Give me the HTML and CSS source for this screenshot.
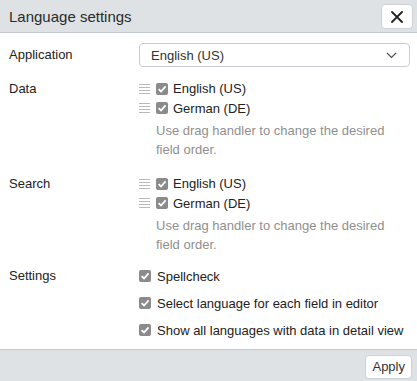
FILE: index.html
```html
<!DOCTYPE html>
<html>
<head>
<meta charset="utf-8">
<link rel="stylesheet" href="styles.css">
</head>
<body>
<div class="dialog">
  <div class="header">
    <span class="title">Language settings</span>
    <button class="close" aria-label="Close">
      <svg width="12" height="12" viewBox="0 0 12 12"><path d="M1 1L11 11M11 1L1 11" stroke="#222" stroke-width="1.8" stroke-linecap="round"/></svg>
    </button>
  </div>
  <div class="body">
    <div class="row row-app">
      <div class="label">Application</div>
      <div class="content">
        <div class="select">
          <span>English (US)</span>
          <svg width="11" height="7" viewBox="0 0 11 7"><path d="M1 1L5.5 5.5L10 1" fill="none" stroke="#555" stroke-width="1.2"/></svg>
        </div>
      </div>
    </div>
    <div class="row row-data">
      <div class="label">Data</div>
      <div class="content">
        <div class="item"><span class="handle"></span><span class="cb"></span><span>English (US)</span></div>
        <div class="item"><span class="handle"></span><span class="cb"></span><span>German (DE)</span></div>
        <div class="hint">Use drag handler to change the desired<br>field order.</div>
      </div>
    </div>
    <div class="row row-search">
      <div class="label">Search</div>
      <div class="content">
        <div class="item"><span class="handle"></span><span class="cb"></span><span>English (US)</span></div>
        <div class="item"><span class="handle"></span><span class="cb"></span><span>German (DE)</span></div>
        <div class="hint">Use drag handler to change the desired<br>field order.</div>
      </div>
    </div>
    <div class="row row-settings">
      <div class="label">Settings</div>
      <div class="content settings">
        <div class="sitem"><span class="cb"></span><span>Spellcheck</span></div>
        <div class="sitem"><span class="cb"></span><span>Select language for each field in editor</span></div>
        <div class="sitem"><span class="cb"></span><span>Show all languages with data in detail view</span></div>
      </div>
    </div>
  </div>
  <div class="footer">
    <button class="apply">Apply</button>
  </div>
</div>
</body>
</html>
```
FILE: styles.css
```css
* { box-sizing: border-box; }
html, body { margin: 0; padding: 0; }
body {
  font-family: "Liberation Sans", Arial, sans-serif;
  font-size: 13px;
  color: #222;
  background: #fff;
  width: 417px;
  height: 381px;
  overflow: hidden;
}
.dialog { width: 417px; height: 381px; display: flex; flex-direction: column; }
.header {
  height: 33px;
  background: #dee2e5;
  border-bottom: 1px solid #c5cacf;
  display: flex;
  align-items: center;
  justify-content: space-between;
  padding: 0 4px 0 9px;
}
.title { font-size: 15px; color: #2a2a2a; }
.close {
  width: 32px;
  height: 25px;
  background: #fff;
  border: 1px solid #cfd3d7;
  border-radius: 4px;
  display: flex;
  align-items: center;
  justify-content: center;
  padding: 0;
  margin-top: 1px;
}
.body { flex: 1; padding: 10px 7px 0 9px; }
.row { display: grid; grid-template-columns: 130px 1fr; }
.label { line-height: 19px; }
.row-app .label { line-height: 24px; }
.select {
  height: 24px;
  border: 1px solid #c9cdd1;
  border-radius: 4px;
  display: flex;
  align-items: center;
  justify-content: space-between;
  padding: 0 12px 0 11px;
  color: #333;
}
.row-data { margin-top: 12px; }
.row-search { margin-top: 15px; }
.row-settings { margin-top: 12px; }
.item { display: flex; align-items: center; height: 19.5px; }
.handle {
  width: 11px;
  height: 10px;
  margin-right: 6px;
  background: repeating-linear-gradient(to bottom, #b9b9b9 0 1px, transparent 1px 3px);
}
.cb {
  width: 12px;
  height: 12px;
  border-radius: 2px;
  background: #8b8b8b url("data:image/svg+xml,%3Csvg xmlns='http://www.w3.org/2000/svg' viewBox='0 0 12 12'%3E%3Cpath d='M2.6 6.2L5 8.5L9.6 3.4' fill='none' stroke='white' stroke-width='1.8'/%3E%3C/svg%3E") center/12px 12px no-repeat;
  margin-right: 5px;
  flex: none;
}
.hint {
  color: #8f8f8f;
  padding-left: 17px;
  line-height: 19px;
  margin-top: 3px;
  white-space: nowrap;
}
.settings { display: flex; flex-direction: column; gap: 7px; }
.sitem { display: flex; align-items: center; height: 19.5px; margin-top: 0.5px; }
.sitem .cb { margin-right: 6px; }
.footer {
  height: 32px;
  background: #dee2e5;
  border-top: 1px solid #c5cacf;
  display: flex;
  align-items: center;
  justify-content: flex-end;
  padding: 0 5px 0 0;
}
.apply {
  font-family: "Liberation Sans", Arial, sans-serif;
  font-size: 13px;
  color: #333;
  background: #fff;
  border: 1px solid #cfd3d7;
  border-radius: 4px;
  height: 24px;
  padding: 0 6px;
  margin-top: 2px;
}
```
